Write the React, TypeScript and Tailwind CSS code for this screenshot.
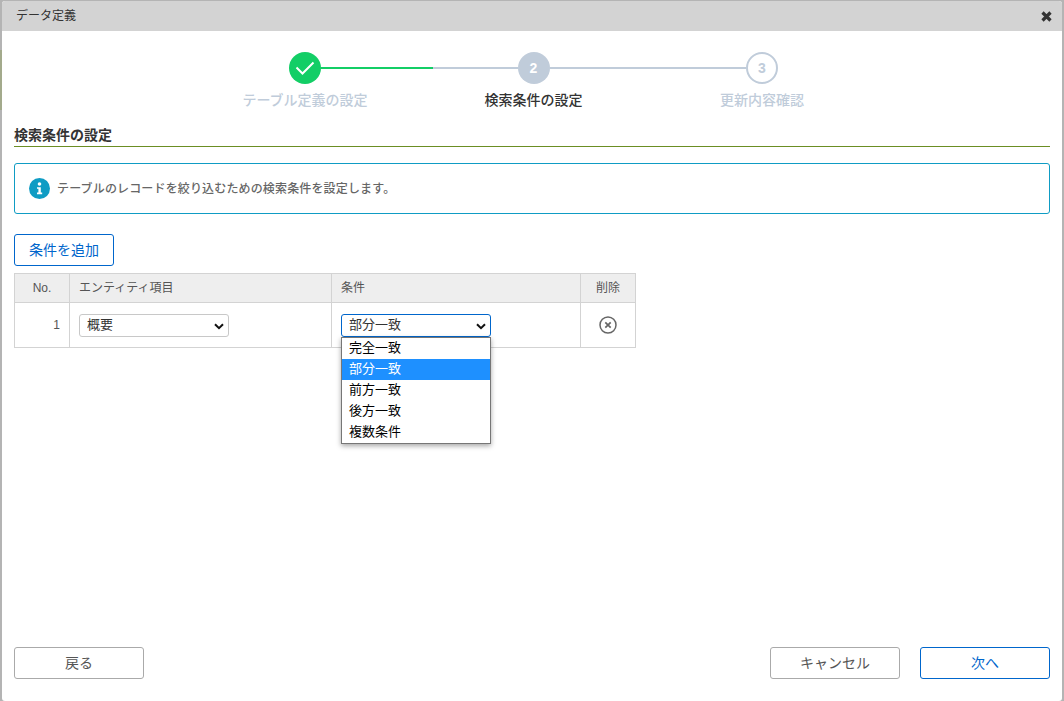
import React from "react";

const font = { fontFamily: '"Liberation Sans", "Noto Sans CJK JP", sans-serif' };

function Step({ label, labelClass, children, left, right }: { label: string; labelClass: string; children: React.ReactNode; left?: React.ReactNode; right?: React.ReactNode }) {
  return (
    <div className="flex w-[228.5px] flex-col items-center">
      <div className="flex h-8 w-full items-center">
        <div className="flex h-[2px] flex-1">{left}</div>
        {children}
        <div className="flex h-[2px] flex-1">{right}</div>
      </div>
      <div className={`mt-[7px] text-[14px] leading-[18px] ${labelClass}`}>{label}</div>
    </div>
  );
}

const Gray = () => <div className="h-full flex-1 bg-[#c0ccda]" />;
const Green = () => <div className="h-full flex-1 bg-[#13ce66]" />;

function Chevron() {
  return (
    <svg className="pointer-events-none absolute right-[5px] top-[9px]" width="10" height="7" viewBox="0 0 10 7">
      <path d="M1 1.2 L5 5.2 L9 1.2" fill="none" stroke="#111" strokeWidth="2" />
    </svg>
  );
}

function FakeMenu() {
  const items = ["完全一致", "部分一致", "前方一致", "後方一致", "複数条件"];
  return (
    <div className="absolute left-[9px] top-[34px] z-10 w-[150px] border border-[#767676] bg-white shadow-[0_2px_5px_rgba(0,0,0,0.35)]">
      {items.map((t, i) => (
        <div key={t} className={`h-[21px] pl-[7px] text-[13px] leading-[20px] ${i === 1 ? "bg-[#1e90ff] text-white" : "text-black"}`}>
          {t}
        </div>
      ))}
    </div>
  );
}

export default function App() {
  return (
    <div className="relative h-[701px] w-[1064px] overflow-hidden bg-[#b4b4b4] pl-[2px] pr-[2px] pt-px" style={font}>
      <div className="absolute left-0 top-[50px] h-[60px] w-[2px] bg-[#a3aa8c]" />
      <div className="flex h-[700px] flex-col rounded-[3px] bg-white">
        <div className="flex h-[30px] shrink-0 items-center justify-between rounded-t-[3px] bg-[#d3d3d3] pl-[14px] pr-[10px]">
          <span className="text-[12px] text-[#333]">データ定義</span>
          <svg width="11" height="11" viewBox="0 0 11 11">
            <path d="M1.5 1.5 L9.5 9.5 M9.5 1.5 L1.5 9.5" stroke="#333" strokeWidth="3.2" />
          </svg>
        </div>

        <div className="flex flex-1 flex-col px-3">
          <div className="mt-[21px] flex justify-center pl-[3px]">
            <Step label="テーブル定義の設定" labelClass="font-medium text-[#c0ccda]" right={<Green />}>
              <div className="flex h-8 w-8 items-center justify-center rounded-full bg-[#13ce66]">
                <svg width="20" height="14" viewBox="0 0 20 14">
                  <path d="M1.5 6.5 L7.5 12.5 L18.5 1.5" fill="none" stroke="#fff" strokeWidth="2" />
                </svg>
              </div>
            </Step>
            <Step
              label="検索条件の設定"
              labelClass="font-medium text-[#333]"
              left={<><div className="h-full w-[14px] bg-[#13ce66]" /><Gray /></>}
              right={<Gray />}
            >
              <div className="flex h-8 w-8 items-center justify-center rounded-full bg-[#c0ccda] text-[14px] font-bold text-white">2</div>
            </Step>
            <Step label="更新内容確認" labelClass="font-medium text-[#c0ccda]" left={<Gray />}>
              <div className="flex h-8 w-8 items-center justify-center rounded-full border-2 border-[#c0ccda] text-[14px] font-bold text-[#c0ccda]">3</div>
            </Step>
          </div>

          <div className="mt-[17px] border-b border-[#6b8e23] pb-[2px] text-[14px] font-bold leading-[18px] text-[#333]">
            検索条件の設定
          </div>

          <div className="mt-4 flex h-[51px] items-center gap-[7px] rounded-[3px] border border-[#0f9cc4] pl-[14px]">
            <svg width="21" height="21" viewBox="0 0 21 21">
              <circle cx="10.5" cy="10.5" r="10.5" fill="#0f9cc4" />
              <circle cx="10.5" cy="6" r="1.8" fill="#fff" />
              <path d="M8 9.2 H11.8 V14.6 H13.2 V16.2 H8 V14.6 H9.4 V10.8 H8 Z" fill="#fff" />
            </svg>
            <span className="text-[12px] font-medium tracking-[0.15px] text-[#666]">テーブルのレコードを絞り込むための検索条件を設定します。</span>
          </div>

          <button className="mt-5 h-8 w-[100px] rounded-[3px] border border-[#0066cc] bg-white text-[14px] text-[#0066cc]">
            条件を追加
          </button>

          <div className="mt-[7px] grid w-[622px] grid-cols-[55px_262px_249px_55px] border-l border-t border-[#d3d3d3] text-[12px] text-[#555]">
            <div className="flex h-[29px] items-center justify-center border-b border-r border-[#d3d3d3] bg-[#eeeeee]">No.</div>
            <div className="flex h-[29px] items-center border-b border-r border-[#d3d3d3] bg-[#eeeeee] pl-[9px]">エンティティ項目</div>
            <div className="flex h-[29px] items-center border-b border-r border-[#d3d3d3] bg-[#eeeeee] pl-[9px]">条件</div>
            <div className="flex h-[29px] items-center justify-center border-b border-r border-[#d3d3d3] bg-[#eeeeee]">削除</div>

            <div className="flex h-[45px] items-center justify-end border-b border-r border-[#d3d3d3] pr-[9px]">1</div>
            <div className="flex h-[45px] items-center border-b border-r border-[#d3d3d3] pl-[9px]">
              <div className="relative">
                <select defaultValue="概要" className="block h-[23px] w-[150px] appearance-none rounded-[3px] border border-[#c8c8c8] bg-white pl-[7px] text-[13px] text-[#333]">
                  <option>概要</option>
                </select>
                <Chevron />
              </div>
            </div>
            <div className="relative flex h-[45px] items-center border-b border-r border-[#d3d3d3] pl-[9px]">
              <div className="relative">
                <select defaultValue="部分一致" className="block h-[23px] w-[150px] appearance-none rounded-[3px] border border-[#0066cc] bg-white pl-[7px] text-[13px] text-[#333]">
                  <option>完全一致</option>
                  <option>部分一致</option>
                  <option>前方一致</option>
                  <option>後方一致</option>
                  <option>複数条件</option>
                </select>
                <Chevron />
              </div>
              <FakeMenu />
            </div>
            <div className="flex h-[45px] items-center justify-center border-b border-r border-[#d3d3d3]">
              <svg width="18" height="18" viewBox="0 0 18 18">
                <circle cx="9" cy="9" r="8" fill="none" stroke="#666" strokeWidth="1.5" />
                <path d="M6.3 6.3 L11.7 11.7 M11.7 6.3 L6.3 11.7" stroke="#666" strokeWidth="1.7" />
              </svg>
            </div>
          </div>

          <div className="mt-auto mb-[22px] flex items-center justify-between">
            <button className="h-8 w-[130px] rounded-[3px] border border-[#aaaaaa] bg-white text-[14px] text-[#555]">戻る</button>
            <div className="flex gap-5">
              <button className="h-8 w-[130px] rounded-[3px] border border-[#aaaaaa] bg-white text-[14px] text-[#555]">キャンセル</button>
              <button className="h-8 w-[130px] rounded-[3px] border border-[#0066cc] bg-white text-[14px] text-[#0066cc]">次へ</button>
            </div>
          </div>
        </div>
      </div>
    </div>
  );
}
